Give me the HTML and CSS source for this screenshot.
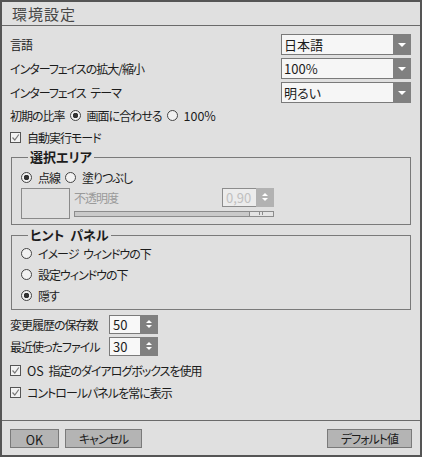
FILE: index.html
```html
<html>
  <head>
    <meta charset="UTF-8">
    <link rel="stylesheet" href="styles.css">
  </head>
  <body>
    <div class="window">
      <div class="titlebar">環境設定</div>
      <div class="content">
        <div class="grid">
          <span>言語</span>
          <div class="select"><span>日本語</span><i class="caret"></i></div>
          <span>インターフェイスの拡大/縮小</span>
          <div class="select"><span>100%</span><i class="caret"></i></div>
          <span>インターフェイス テーマ</span>
          <div class="select"><span>明るい</span><i class="caret"></i></div>
        </div>

        <div class="row">
          <span>初期の比率</span>
          <span class="radio on">画面に合わせる</span>
          <span class="radio"><span class="latin">100%</span></span>
        </div>
        <div class="row"><span class="check">自動実行モード</span></div>

        <fieldset class="group first">
          <legend>選択エリア</legend>
          <div class="row">
            <span class="radio on">点線</span>
            <span class="radio">塗りつぶし</span>
          </div>
          <div class="fill">
            <div class="swatch"></div>
            <div class="opacity">
              <div class="opacity-top">
                <span class="muted">不透明度</span>
                <div class="spin off"><span>0,90</span><i class="arrows"></i></div>
              </div>
              <div class="slider"><i class="thumb"></i></div>
            </div>
          </div>
        </fieldset>

        <fieldset class="group">
          <legend>ヒント パネル</legend>
          <div class="row"><span class="radio">イメージ ウィンドウの下</span></div>
          <div class="row"><span class="radio">設定ウィンドウの下</span></div>
          <div class="row"><span class="radio on">隠す</span></div>
        </fieldset>

        <div class="row spin-row">
          <span class="spin-label">変更履歴の保存数</span>
          <div class="spin"><span>50</span><i class="arrows"></i></div>
        </div>
        <div class="row spin-row">
          <span class="spin-label">最近使ったファイル</span>
          <div class="spin"><span>30</span><i class="arrows"></i></div>
        </div>
        <div class="row check-row"><span class="check"><span><span class="latin">OS</span> 指定のダイアログボックスを使用</span></span></div>
        <div class="row check-row"><span class="check">コントロールパネルを常に表示</span></div>
      </div>
      <div class="footer">
        <button class="ok"><span class="latin">OK</span></button>
        <button class="cancel">キャンセル</button>
        <button class="default">デフォルト値</button>
      </div>
    </div>
  </body>
</html>
```

FILE: styles.css
```css
body {
  margin: 0;
  font-family: "Noto Sans CJK JP", "Noto Sans", sans-serif;
  font-size: 12px;
  font-feature-settings: "palt";
  letter-spacing: -1px;
  word-spacing: 3px;
  color: #1c1c1c;
  background: #e0e0e0;
}
.latin {
  letter-spacing: 0;
  font-size: 12.5px;
}
.window {
  width: 422px;
  height: 457px;
  box-sizing: border-box;
  border: 2px solid #555;
  display: flex;
  flex-direction: column;
}
.titlebar {
  height: 23px;
  line-height: 23px;
  border-bottom: 1px solid #6a6a6a;
  padding-left: 10px;
  font-size: 15px;
  letter-spacing: 1px;
  color: #474747;
}
.content {
  flex: 1;
  padding: 8px 9px 0 8px;
}
.grid {
  display: grid;
  grid-template-columns: 1fr 130px;
  grid-auto-rows: 21px;
  row-gap: 3px;
  align-items: center;
}
.select {
  height: 21px;
  box-sizing: border-box;
  border: 1px solid #7a7a7a;
  background: #f6f6f6;
  display: flex;
  align-items: center;
  padding-left: 2px;
  font-size: 13px;
  letter-spacing: 0;
}
.select span {
  flex: 1;
}
.caret {
  width: 18px;
  height: 21px;
  margin-right: -1px;
  background: #808080;
  position: relative;
}
.caret::after {
  content: "";
  position: absolute;
  left: 5px;
  top: 9px;
  border-left: 4px solid transparent;
  border-right: 4px solid transparent;
  border-top: 4px solid #fff;
}
.row {
  height: 22px;
  display: flex;
  align-items: center;
  gap: 5px;
}
.grid + .row {
  margin-top: 1px;
}
.radio,
.check {
  display: flex;
  align-items: center;
  gap: 6px;
}
.radio::before {
  content: "";
  width: 11px;
  height: 11px;
  box-sizing: border-box;
  border: 1px solid #444;
  border-radius: 50%;
  background: #f2f2f2;
}
.radio.on::before {
  background: radial-gradient(circle, #333 0 2.5px, #f2f2f2 3px);
}
.check::before {
  content: "";
  width: 11px;
  height: 11px;
  box-sizing: border-box;
  border: 1px solid #555;
  background: #f2f2f2 url("data:image/svg+xml;utf8,<svg xmlns='http://www.w3.org/2000/svg' width='9' height='9'><path d='M1.5 4.5 L3.8 7 L7.8 1.5' fill='none' stroke='%23777' stroke-width='1.2'/></svg>") center no-repeat;
}
.group {
  margin: 1px 0 0 1px;
  padding: 0 8px 5px 9px;
  border: 1px solid #7a7a7a;
}
.group + .group {
  margin-top: 2px;
  padding-bottom: 3px;
}
.group legend {
  padding: 0 2px;
  margin-left: 7px;
  font-weight: bold;
  font-size: 13px;
  line-height: 16px;
  letter-spacing: 0;
}
.group .row {
  height: 21px;
}
.group.first .row {
  margin-top: 2px;
}
.fill {
  display: flex;
  gap: 4px;
}
.swatch {
  width: 49px;
  height: 31px;
  box-sizing: border-box;
  border: 1px solid #8a8a8a;
}
.opacity {
  width: 200px;
}
.opacity-top {
  display: flex;
  justify-content: space-between;
  align-items: center;
  height: 18px;
}
.muted {
  color: #9a9a9a;
}
.spin {
  width: 49px;
  height: 19px;
  box-sizing: border-box;
  border: 1px solid #7a7a7a;
  background: #f8f8f8;
  display: flex;
  align-items: center;
  font-size: 13px;
  letter-spacing: 0;
}
.spin span {
  flex: 1;
  padding-left: 3px;
}
.arrows {
  width: 18px;
  height: 19px;
  margin-right: -1px;
  background: #808080;
  position: relative;
}
.arrows::before,
.arrows::after {
  content: "";
  position: absolute;
  left: 6px;
  border-left: 3px solid transparent;
  border-right: 3px solid transparent;
}
.arrows::before {
  top: 5px;
  border-bottom: 3px solid #fff;
}
.arrows::after {
  top: 10px;
  border-top: 3px solid #fff;
}
.spin.off {
  width: 52px;
  border-color: #8c8c8c;
  background: #ececec;
  color: #c0c0c0;
}
.spin.off .arrows {
  background: #b2b2b2;
}
.slider {
  margin-top: 5px;
  height: 6px;
  box-sizing: border-box;
  border: 1px solid #8c8c8c;
  background: linear-gradient(to right, #cacaca 0 174px, #e4e4e4 174px);
  position: relative;
}
.thumb {
  position: absolute;
  left: 174px;
  top: -1px;
  width: 13px;
  height: 6px;
  box-sizing: border-box;
  border-left: 1px solid #8c8c8c;
}
.thumb::after {
  content: "";
  position: absolute;
  left: 9px;
  top: 0;
  width: 2px;
  height: 4px;
  border-left: 1px solid #8c8c8c;
  border-right: 1px solid #8c8c8c;
}
.spin-row {
  height: 19px;
  gap: 0;
}
.group + .spin-row {
  margin-top: 5px;
}
.spin-row + .spin-row {
  margin-top: 3px;
}
.spin-label {
  width: 99px;
}
.spin-row + .check-row {
  margin-top: 3px;
}
.footer {
  height: 35px;
  box-sizing: border-box;
  border-top: 1px solid #6a6a6a;
  padding: 8px 8px 0 8px;
  display: flex;
  gap: 6px;
}
.footer button {
  height: 19px;
  padding: 0;
  border: 1px solid #7a7a7a;
  background: #b4b4b4;
  font-family: inherit;
  font-size: 12px;
  font-feature-settings: "palt";
  letter-spacing: -1px;
  color: #1c1c1c;
}
.footer .ok {
  width: 49px;
}
.footer .cancel {
  width: 77px;
}
.footer .default {
  width: 85px;
  margin-left: auto;
}
```
